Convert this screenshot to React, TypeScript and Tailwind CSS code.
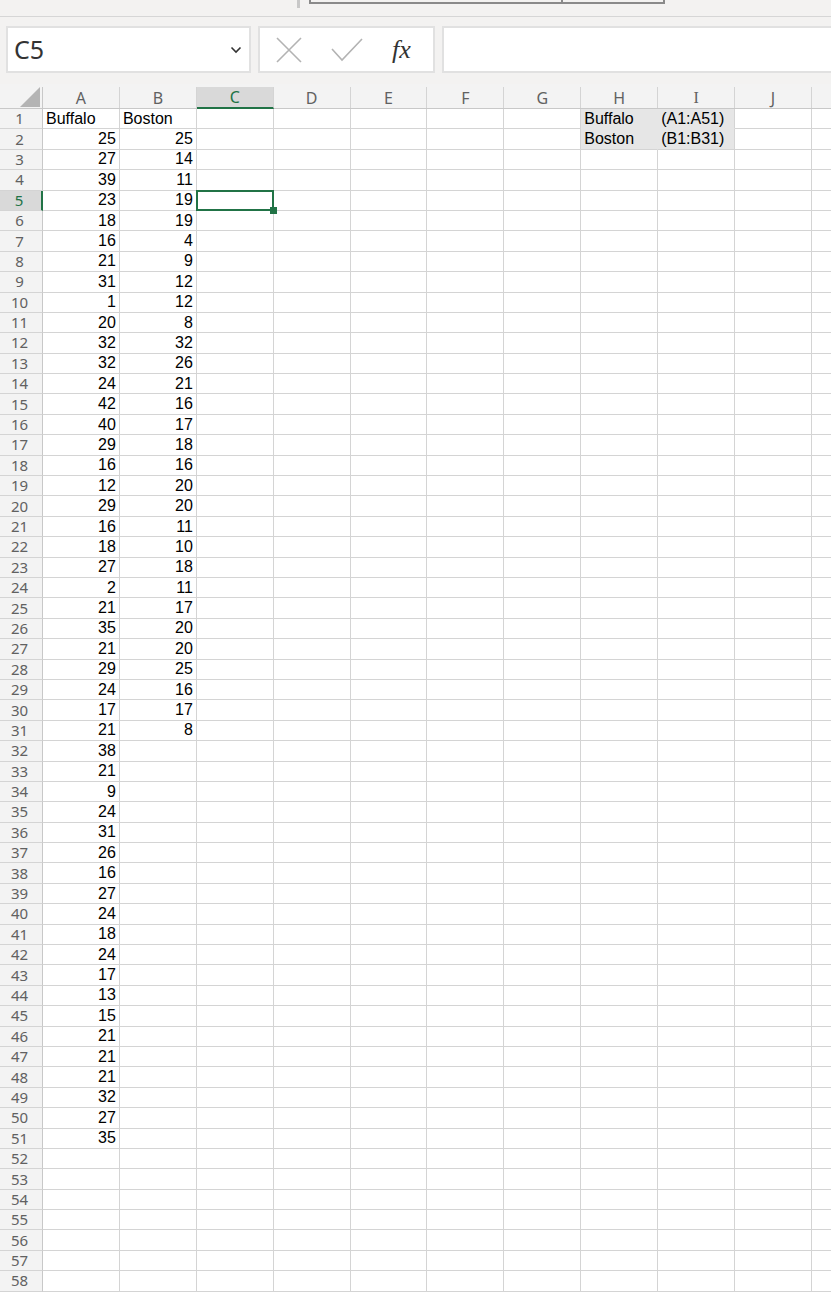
import React from "react";

const colsLetters = ["A", "B", "C", "D", "E", "F", "G", "H", "I", "J"];

const A = [25,27,39,23,18,16,21,31,1,20,32,32,24,42,40,29,16,12,29,16,18,27,2,21,35,21,29,24,17,21,38,21,9,24,31,26,16,27,24,18,24,17,13,15,21,21,21,32,27,35];
const B = [25,14,11,19,19,4,9,12,12,8,32,26,21,16,17,18,16,20,20,11,10,18,11,17,20,20,25,16,17,8];

function cellValue(r: number, c: number): { text: string; num: boolean } | null {
  if (c === 0) {
    if (r === 1) return { text: "Buffalo", num: false };
    if (r >= 2 && r <= 51) return { text: String(A[r - 2]), num: true };
  }
  if (c === 1) {
    if (r === 1) return { text: "Boston", num: false };
    if (r >= 2 && r <= 31) return { text: String(B[r - 2]), num: true };
  }
  if (c === 7) {
    if (r === 1) return { text: "Buffalo", num: false };
    if (r === 2) return { text: "Boston", num: false };
  }
  if (c === 8) {
    if (r === 1) return { text: "(A1:A51)", num: false };
    if (r === 2) return { text: "(B1:B31)", num: false };
  }
  return null;
}

export default function App() {
  const rows = Array.from({ length: 58 }, (_, i) => i + 1);
  return (
    <div className="w-[831px] h-[1294px] overflow-hidden bg-white relative" style={{ fontFamily: "'Liberation Sans', Arial, sans-serif" }}>
      {/* top ribbon remnant */}
      <div className="h-[17px] bg-[#f3f2f1] border-b border-[#d6d6d6] shadow-[0_1px_2px_rgba(0,0,0,0.08)] flex items-start">
        <div className="ml-[297px] w-[3px] h-[8px] bg-[#c8c8c8]" />
        <div className="ml-[9px] w-[356px] h-[4px] border-x-2 border-b-2 border-[#8a8a8a] flex">
          <div className="w-[252px] h-full border-r-2 border-[#8a8a8a]" />
        </div>
      </div>
      {/* formula bar */}
      <div className="h-[67px] bg-[#f3f2f1] flex items-start pt-[9px] pl-[6px]">
        <div className="w-[245px] h-[47px] bg-white border-2 border-[#e1e1e1] flex items-center justify-between pl-[6px] pr-[6px]">
          <span className="text-[25px] text-[#333] leading-none" style={{ fontFamily: "'Noto Sans', 'Open Sans', sans-serif" }}>C5</span>
          <svg width="12" height="8" viewBox="0 0 12 8" className="mr-[1px]">
            <path d="M1.5 1.5 L6 6 L10.5 1.5" fill="none" stroke="#333" strokeWidth="1.6" />
          </svg>
        </div>
        <div className="ml-[7px] w-[177px] h-[47px] bg-white border-2 border-[#e1e1e1] flex items-center">
          <svg width="26" height="26" viewBox="0 0 26 26" className="ml-[16px]">
            <path d="M1 1 L25 25 M25 1 L1 25" stroke="#b3b3b3" strokeWidth="1.6" fill="none" />
          </svg>
          <svg width="32" height="24" viewBox="0 0 32 24" className="ml-[29px]">
            <path d="M1 11 L11 22 L31 1" stroke="#b3b3b3" strokeWidth="1.6" fill="none" />
          </svg>
          <span className="ml-[29px] text-[26px] italic text-[#333] leading-none" style={{ fontFamily: "'Liberation Serif', 'DejaVu Serif', serif" }}>fx</span>
        </div>
        <div className="ml-[7px] flex-1 h-[47px] bg-white border-y-2 border-l-2 border-[#e1e1e1]" />
      </div>
      {/* grid */}
      <div className="bg-white">
        {/* header row */}
        <div className="flex h-[25px] bg-[#f3f3f3] border-b border-[#c8c8c8] pt-[3px]">
          <div className="w-[43px] shrink-0 border-r border-[#c8c8c8] relative">
            <svg width="20" height="20" viewBox="0 0 20 20" className="absolute right-[2px] bottom-[1px]">
              <path d="M20 0 L20 20 L0 20 Z" fill="#b4b4b4" />
            </svg>
          </div>
          {colsLetters.map((l, i) => (
            <div
              key={l}
              className={
                "w-[76.9px] shrink-0 border-r border-[#d4d4d4] flex items-center justify-center text-[16px] " +
                (i === 2 ? "bg-[#d9d9d9] text-[#217346] border-b-2 border-b-[#217346] -mb-[1px]" : "text-[#616161]")
              }
              style={{ fontFamily: i === 8 ? "'Liberation Serif', 'DejaVu Serif', serif" : "'Noto Sans', 'Open Sans', sans-serif" }}
            >
              {l}
            </div>
          ))}
          <div className="flex-1" />
        </div>
        {rows.map((r) => (
          <div key={r} className="flex h-[20.4px]">
            <div
              className={
                "w-[43px] shrink-0 flex items-center justify-center pr-[3px] text-[15px] leading-none border-b border-[#d4d4d4] " +
                (r === 5 ? "bg-[#d9d9d9] text-[#217346] border-r-2 border-r-[#217346]" : "bg-[#f3f3f3] text-[#616161] border-r border-r-[#c8c8c8]")
              }
              style={{ fontFamily: "'Noto Sans', 'Open Sans', sans-serif" }}
            >
              {r}
            </div>
            {colsLetters.map((_, c) => {
              const v = cellValue(r, c);
              const inRange = (c === 7 || c === 8) && (r === 1 || r === 2);
              const sel = r === 5 && c === 2;
              let cls = "w-[76.9px] shrink-0 relative flex items-center text-[16px] leading-none text-black whitespace-nowrap ";
              if (inRange) {
                cls += "bg-[#e6e6e6] ";
                cls += c === 8 ? "border-r border-r-[#d4d4d4] " : "border-r border-r-[#e6e6e6] ";
                cls += r === 1 ? "border-b border-b-[#e6e6e6] " : "border-b border-b-[#d4d4d4] ";
              } else {
                cls += "border-r border-b border-[#d4d4d4] ";
              }
              cls += v && v.num ? "justify-end pr-[3px] " : "justify-start pl-[3px] ";
              if (sel) cls += "z-10 ";
              return (
                <div key={c} className={cls}>
                  {v ? v.text : null}
                  {sel && (
                    <div className="absolute -left-[1px] -top-[1px] -right-[1px] -bottom-[1px] border-2 border-[#217346]">
                      <div className="absolute -right-[5px] -bottom-[5px] w-[7px] h-[7px] bg-[#217346]" />
                    </div>
                  )}
                </div>
              );
            })}
            <div className="flex-1 border-b border-[#d4d4d4]" />
          </div>
        ))}
      </div>
    </div>
  );
}
